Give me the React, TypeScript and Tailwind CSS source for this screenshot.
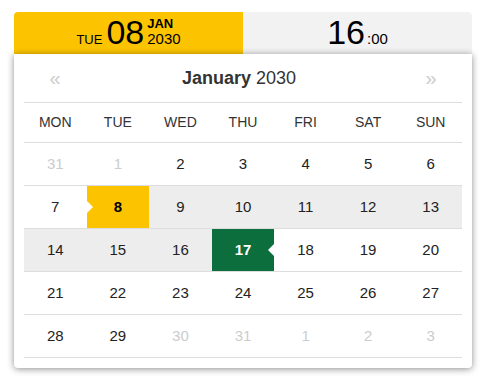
import React from 'react'

const DAYS = ['MON', 'TUE', 'WED', 'THU', 'FRI', 'SAT', 'SUN']

type Cell = { d: number; muted?: boolean }

const WEEKS: Cell[][] = [
  [{ d: 31, muted: true }, { d: 1, muted: true }, { d: 2 }, { d: 3 }, { d: 4 }, { d: 5 }, { d: 6 }],
  [7, 8, 9, 10, 11, 12, 13].map(d => ({ d })),
  [14, 15, 16, 17, 18, 19, 20].map(d => ({ d })),
  [21, 22, 23, 24, 25, 26, 27].map(d => ({ d })),
  [{ d: 28 }, { d: 29 }, { d: 30, muted: true }, { d: 31, muted: true }, { d: 1, muted: true }, { d: 2, muted: true }, { d: 3, muted: true }],
]

// range 8 -> 17
function cellClass(w: number, c: Cell) {
  if (c.muted) return 'text-[#cccccc]'
  if (w === 1 && c.d === 8) return 'bg-[#fcc400] text-black font-bold'
  if (w === 2 && c.d === 17) return 'bg-[#0b6e3c] text-white font-bold'
  if ((w === 1 && c.d > 8) || (w === 2 && c.d < 17)) return 'bg-[#ededed] text-[#222]'
  return 'text-[#222]'
}

export default function App() {
  return (
    <div className="w-[485px] h-[385px] bg-white pt-3 pl-[14px] font-['Liberation_Sans',Arial,sans-serif]">
      <div className="w-[458px]">
        {/* selected date / time */}
        <div className="flex h-[42px]">
          <div className="w-[229px] bg-[#fcc400] rounded-tl-[4px] flex items-end justify-center pb-[5px] text-black">
            <div className="flex items-baseline leading-none">
              <span className="text-[13px]">TUE</span>
              <span className="text-[34px] ml-[4px]">08</span>
              <span className="relative text-[15px] ml-[3px]">
                <span className="absolute left-0 bottom-[16px] text-[13px] font-bold">JAN</span>
                2030
              </span>
            </div>
          </div>
          <div className="w-[229px] bg-[#f2f2f2] rounded-tr-[4px] flex items-end justify-center pb-[5px] text-black">
            <div className="flex items-baseline leading-none">
              <span className="text-[34px]">16</span>
              <span className="text-[15px] ml-[2px]">:00</span>
            </div>
          </div>
        </div>

        {/* calendar panel */}
        <div className="relative z-10 bg-white rounded-b-[4px] shadow-[0_1px_7px_rgba(0,0,0,0.45)] px-[10px] pb-[10px]">
          <div className="flex items-center h-[48px] text-[#333]">
            <span className="w-[62px] text-center text-[#cccccc] text-[20px] leading-none">«</span>
            <span className="flex-1 text-center text-[18px] mr-[8px]">
              <b>January</b> 2030
            </span>
            <span className="w-[62px] text-center text-[#cccccc] text-[20px] leading-none">»</span>
          </div>
          <div className="grid grid-cols-7 border-t border-[#dddddd] h-[40px] items-center text-[14px] text-[#333]">
            {DAYS.map(d => (
              <div key={d} className="text-center">{d}</div>
            ))}
          </div>
          {WEEKS.map((week, w) => (
            <div key={w} className="grid grid-cols-7 border-t border-[#dddddd] h-[43px]">
              {week.map((c, i) => (
                <div key={i} className={`relative flex items-center justify-center text-[15px] ${cellClass(w, c)}`}>
                  {c.d}
                  {w === 1 && c.d === 8 && (
                    <span className="absolute left-0 top-1/2 -translate-y-1/2 w-0 h-0 border-y-[6px] border-y-transparent border-l-[6px] border-l-white" />
                  )}
                  {w === 2 && c.d === 17 && (
                    <span className="absolute right-0 top-1/2 -translate-y-1/2 w-0 h-0 border-y-[6px] border-y-transparent border-r-[6px] border-r-white" />
                  )}
                </div>
              ))}
            </div>
          ))}
          <div className="border-t border-[#dddddd]" />
        </div>
      </div>
    </div>
  )
}
